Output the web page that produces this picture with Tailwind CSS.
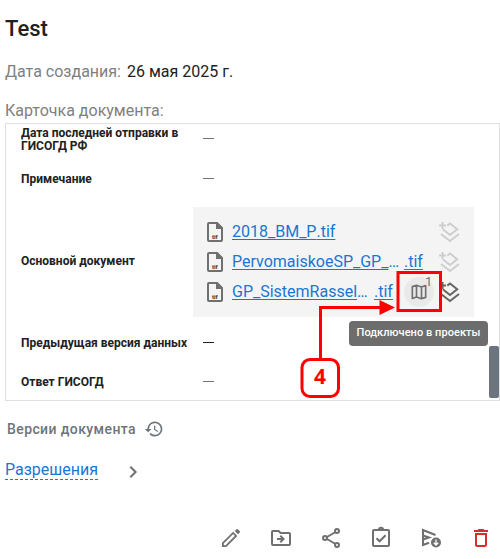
<!DOCTYPE html>
<html lang="ru">
<head>
<meta charset="utf-8">
<title>Test</title>
<script src="https://cdn.jsdelivr.net/npm/@tailwindcss/browser@4"></script>
</head>
<body class="bg-white text-[#212121] font-['Roboto',sans-serif]">
<svg class="hidden">
  <symbol id="file" viewBox="0 0 24 24"><path fill="none" stroke="#707070" stroke-width="2" stroke-linejoin="round" d="M14 3H6Q5 3 5 4V20Q5 21 6 21H18Q19 21 19 20V8Z"/><path fill="#707070" d="M13 2h1l6 6v1h-7z"/></symbol>
  <symbol id="layers" viewBox="0 0 24 24"><path fill="none" stroke="currentColor" stroke-width="2" d="M10.3 5.6 13 3.500l7.200 5.800L13 15 5.800 9.300M4 14l9 7 9-7M5.500 2v7M2 5.500h7"/></symbol>
</svg>
<main class="relative h-[559px] w-[500px] overflow-hidden pl-[5px]">
  <h1 class="pt-[16px] text-[22px] leading-[26px] font-medium">Test</h1>
  <div class="mt-[20px] flex gap-[6px] text-[16px] leading-[20px]"><span class="text-[#808080]">Дата создания:</span><span>26 мая 2025 г.</span></div>
  <div class="mt-[19px] h-[22px] text-[16px] leading-[20px] text-[#808080]">Карточка документа:</div>

  <section class="relative h-[278px] border border-[#e0e0e0] text-[12px] leading-[13px]">
    <div class="flex h-[30px] items-center pl-[15px]"><div class="w-[182px] pt-[2px] font-bold">Дата последней отправки в<br>ГИСОГД РФ</div><i class="mb-px h-px w-[11px] bg-[#6c757d]"></i></div>
    <div class="flex h-[50px] items-center pl-[15px]"><div class="w-[182px] font-bold">Примечание</div><i class="mb-px h-px w-[11px] bg-[#6c757d]"></i></div>
    <div class="flex h-[116px] items-center pl-[15px]">
      <div class="w-[172px] pb-[2px] font-bold">Основной документ</div>
      <div class="w-[281px] bg-[#f4f4f4] py-[10px] pr-[13px] pl-[10px] text-[16px] leading-[20px] text-[#1976d2]">
        <div class="flex h-[30px] items-center">
          <span class="relative mr-[5px] size-6 shrink-0"><svg class="size-6"><use href="#file"/></svg><b class="absolute top-[13px] left-[9px] text-[6px] leading-[8px] text-[#3b302a]">tif</b></span>
          <span class="underline underline-offset-2">2018_BM_P</span><span class="underline underline-offset-2">.tif</span>
          <svg class="ml-auto size-6 text-[#cecece]"><use href="#layers"/></svg>
        </div>
        <div class="flex h-[30px] items-center">
          <span class="relative mr-[5px] size-6 shrink-0"><svg class="size-6"><use href="#file"/></svg><b class="absolute top-[13px] left-[9px] text-[6px] leading-[8px] text-[#3b302a]">tif</b></span>
          <span class="w-[172px] whitespace-nowrap"><span class="underline underline-offset-2">PervomaiskoeSP_GP_</span>…</span><span class="underline underline-offset-2">.tif</span>
          <svg class="ml-auto size-6 text-[#cecece]"><use href="#layers"/></svg>
        </div>
        <div class="flex h-[30px] items-center">
          <span class="relative mr-[5px] size-6 shrink-0"><svg class="size-6"><use href="#file"/></svg><b class="absolute top-[13px] left-[9px] text-[6px] leading-[8px] text-[#3b302a]">tif</b></span>
          <span class="w-[142px] whitespace-nowrap"><span class="underline underline-offset-2">GP_SistemRassel</span>…</span><span class="underline underline-offset-2">.tif</span>
          <span class="relative mr-[3px] ml-auto flex size-[30px] shrink-0 items-center justify-center rounded-full bg-[#e9e9e9]">
            <svg class="size-5" viewBox="0 0 24 24" fill="none" stroke="#707070" stroke-width="2" stroke-linejoin="round"><path d="M4 5.5 9 4l6 2 5-1.8V18.5L15 20l-6-2-5 1.8ZM9 4v14M15 6v14"/></svg>
            <span class="absolute -top-[1px] left-[21px] text-[13px] leading-[12px] text-[#6c757d]">1</span>
          </span>
          <svg class="size-6 shrink-0 text-[#666]"><use href="#layers"/></svg>
        </div>
      </div>
    </div>
    <div class="flex h-[44px] items-center pl-[15px]"><div class="w-[182px] pt-[2px] font-bold whitespace-nowrap">Предыдущая версия данных</div><i class="h-px w-[11px] bg-[#212121]"></i></div>
    <div class="flex h-[34px] items-center pl-[15px]"><div class="w-[182px] pt-[2px] font-bold">Ответ ГИСОГД</div><i class="h-px w-[11px] bg-[#6c757d]"></i></div>
    <div class="absolute top-[222px] right-0 h-[52px] w-[10px] rounded-[2px] bg-[#6c757d]"></div>
  </section>

  <div class="mt-[16px] flex h-6 items-center gap-[8px] pl-[2px] text-[14px] font-medium tracking-[0.4px] text-[#6c757d]">Версии документа
    <svg class="size-[20px]" viewBox="0 0 24 24" fill="#6c757d"><path d="M13.500 8H12v5l4.280 2.540.72-1.210-3.500-2.080V8M13 3a9 9 0 0 0-9 9H1l3.960 4.030L9 12H6a7 7 0 1 1 2.060 4.940l-1.420 1.420A9 9 0 1 0 13 3"/></svg>
  </div>
  <div class="mt-[19px] flex h-6 items-start">
    <span class="border-b border-dashed border-[#1976d2] text-[16px] leading-[19px] text-[#1976d2]">Разрешения</span>
    <svg class="ml-[23px] size-6" viewBox="0 0 24 24" fill="none" stroke="#707070" stroke-width="2"><path d="m9.300 6.700 5.300 5.300-5.300 5.300"/></svg>
  </div>
  <div class="mt-[42px] flex gap-[26px] pl-[214px] text-[#707070]">
    <svg class="size-6" viewBox="0 0 24 24" fill="none" stroke="currentColor" stroke-width="1.800"><path d="M3.900 20.100v-3L14.100 6.900l3 3L6.900 20.100Z"/><path fill="currentColor" stroke="none" d="m15.800 4.900 1.700-1.700q.6-.5 1.200 0l2.100 2.100q.6.600 0 1.200l-1.700 1.700z"/></svg>
    <svg class="size-6" viewBox="0 0 24 24" fill="currentColor"><path d="M20 6h-8l-2-2H4a2 2 0 0 0-2 2v12a2 2 0 0 0 2 2h16a2 2 0 0 0 2-2V8a2 2 0 0 0-2-2m0 12H4V6h5.170l2 2H20zm-7.840-6H8v2h4.160l-1.590 1.590L11.990 17 16 13l-4.010-4-1.410 1.410z"/></svg>
    <svg class="size-6" viewBox="0 0 24 24" fill="none" stroke="currentColor" stroke-width="2"><path d="m8 11 8.500-5M8 13l8.500 5"/><circle cx="6" cy="12" r="2"/><circle cx="18" cy="5" r="2"/><circle cx="18" cy="19" r="2"/></svg>
    <svg class="size-6" viewBox="0 0 24 24" fill="none" stroke="currentColor" stroke-width="2"><rect x="4" y="4" width="16" height="16" rx="1"/><path d="M10 3.500a2 1.800 0 0 1 4 0"/><path d="m7.500 12.200 3.100 3.100 6-6"/></svg>
    <svg class="size-6" viewBox="0 0 24 24" fill="none" stroke="currentColor" stroke-width="2"><path d="M16.500 9 4 4v15l6-2.300M4 9.500l6 2-6 2"/><circle cx="17" cy="16.500" r="5" fill="currentColor" stroke="none"/><path stroke="#fff" stroke-width="1.300" d="M17 13.500v5.500M14.800 16.800 17 19l2.200-2.200"/></svg>
    <svg class="size-6" viewBox="0 0 24 24" fill="#d32f2f"><path d="M16 9v10H8V9zm-1.500-6h-5l-1 1H5v2h14V4h-3.500zM18 7H6v12a2 2 0 0 0 2 2h8a2 2 0 0 0 2-2z"/></svg>
  </div>

  <div class="absolute top-[321px] left-[349px] flex h-[25px] w-[139px] items-center justify-center rounded bg-[#6d6d6d] text-[11px] font-medium tracking-[0.05px] whitespace-nowrap text-white">Подключено в проекты</div>
  <svg class="absolute top-0 left-0" width="500" height="559" fill="none" stroke="#f00" stroke-width="3">
    <rect x="398" y="272.500" width="42.500" height="38"/>
    <path d="M320.500 360V307.500H382"/><path d="M379.500 300 395 307.500 379.500 315Z" fill="#f00" stroke="none"/>
    <rect x="302" y="359.500" width="36.500" height="37" rx="8" fill="#fff"/>
  </svg>
  <div class="absolute top-[359px] left-[302px] flex h-[36px] w-[36px] items-center justify-center font-['Noto_Sans',sans-serif] text-[21px] font-bold text-[#f00]">4</div>
</main>
</body>
</html>
